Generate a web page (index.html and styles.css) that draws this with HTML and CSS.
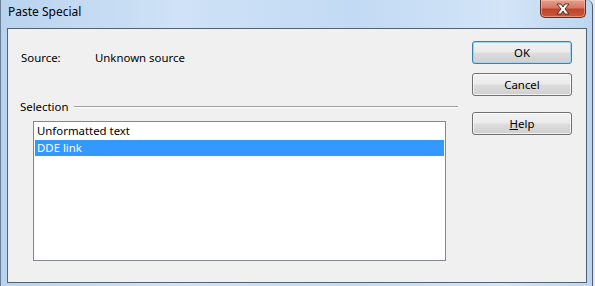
FILE: index.html
```html
<!DOCTYPE html>
<html lang="en">
<head>
    <meta charset="UTF-8">
    <title>Paste Special</title>
    <link rel="stylesheet" href="styles.css">
</head>
<body>
    <div class="window">
        <div class="titlebar">
            <span class="title">Paste Special</span>
            <div class="close-btn">
                <svg width="16" height="12" viewBox="0 0 16 12">
                    <path d="M2 1 L6 1 L8 4 L10 1 L14 1 L10 6 L14 11 L10 11 L8 8 L6 11 L2 11 L6 6 Z" fill="#fff" stroke="#5a2a22" stroke-width="1" stroke-linejoin="round"/>
                </svg>
            </div>
        </div>
        <div class="client">
            <div class="main">
                <div class="source-row">
                    <span class="source-label">Source:</span>
                    <span>Unknown source</span>
                </div>
                <div class="group-header">
                    <span>Selection</span>
                    <div class="group-line"></div>
                </div>
                <div class="listbox">
                    <div class="item">Unformatted text</div>
                    <div class="item selected">DDE link</div>
                </div>
            </div>
            <div class="buttons">
                <button class="btn default">OK</button>
                <button class="btn">Cancel</button>
                <button class="btn help"><u>H</u>elp</button>
            </div>
        </div>
    </div>
</body>
</html>
```

FILE: styles.css
```css
body {
    margin: 0;
    padding: 0;
    width: 595px;
    height: 286px;
    overflow: hidden;
    background-color: #dfe7ef;
    font-family: "Noto Sans", "Open Sans", sans-serif;
    font-size: 11.4px;
    color: #000;
}
.window {
    width: 593px;
    height: 286px;
    box-sizing: border-box;
    background: linear-gradient(90deg, #b9d3ee 0%, #cfe2f6 30%, #c2daf3 60%, #d3e5f7 85%, #bcd5ef 100%);
    border-left: 1px solid #6a7f96;
    border-right: 1px solid #4d5f72;
    border-radius: 0 6px 0 0;
    display: flex;
    flex-direction: column;
}
.titlebar {
    height: 28px;
    display: flex;
    align-items: flex-start;
    box-sizing: border-box;
}
.title {
    padding-left: 7px;
    padding-top: 4px;
    line-height: 16px;
    font-size: 12px;
    color: #000;
}
.close-btn {
    margin-left: auto;
    margin-right: 6px;
    width: 44px;
    height: 17px;
    border: 1px solid #6b2a22;
    border-top: none;
    border-radius: 0 0 5px 5px;
    background: linear-gradient(#e3a08e 0%, #d57764 45%, #c0432a 55%, #c85a3c 100%);
    box-shadow: inset 0 0 0 1px rgba(255, 200, 180, 0.5);
    display: flex;
    justify-content: center;
    align-items: center;
}
.client {
    margin: 0 5px 0 6px;
    height: 255px;
    box-sizing: border-box;
    border: 1px solid #55626f;
    background-color: #f0f0f0;
    display: flex;
}
.main {
    flex: 1;
    padding-left: 12px;
}
.source-row {
    display: flex;
    margin-top: 21px;
    line-height: 16px;
}
.source-label {
    width: 74px;
    padding-left: 1px;
}
.group-header {
    display: flex;
    align-items: center;
    margin-top: 33px;
    line-height: 16px;
}
.group-line {
    flex: 1;
    margin-left: 5px;
    height: 1px;
    background-color: #a0a0a0;
    border-bottom: 1px solid #fff;
}
.listbox {
    margin: 6px 0 0 13px;
    width: 413px;
    height: 140px;
    box-sizing: border-box;
    border: 1px solid #828790;
    background-color: #fff;
    padding: 1px 1px 0;
}
.item {
    line-height: 16px;
    padding-left: 2px;
    margin-bottom: 1px;
}
.selected {
    background-color: #3399ff;
    color: #fff;
}
.buttons {
    width: 100px;
    margin: 12px 14px 0 14px;
    display: flex;
    flex-direction: column;
}
.btn {
    width: 100px;
    height: 23px;
    box-sizing: border-box;
    border: 1px solid #707070;
    border-radius: 3px;
    background: linear-gradient(#f2f2f2 0%, #ebebeb 48%, #dddddd 52%, #cfcfcf 100%);
    box-shadow: inset 0 0 0 1px rgba(255, 255, 255, 0.7);
    font-family: inherit;
    font-size: 11.4px;
    color: #000;
    padding: 0;
    margin-bottom: 9px;
}
.default {
    border-color: #3c7fb1;
    box-shadow: inset 0 0 0 1px #9fd5f3;
}
.help {
    margin-top: 7px;
}
```
